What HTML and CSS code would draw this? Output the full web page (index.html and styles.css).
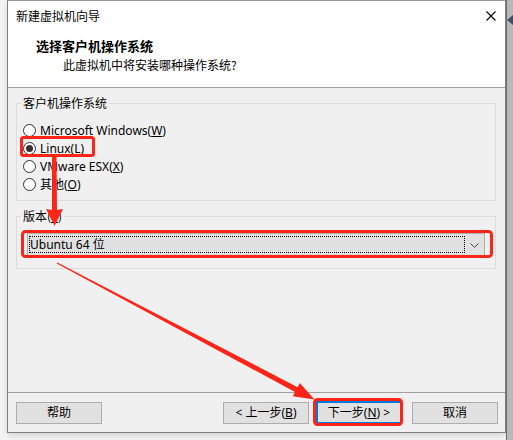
FILE: index.html
```html
<!DOCTYPE html>
<html lang="zh-CN">
<head>
<meta charset="utf-8">
<title>新建虚拟机向导</title>
<link rel="stylesheet" href="styles.css">
</head>
<body>
<div class="page">
  <div class="window">
    <div class="titlebar">
      <span class="title-text">新建虚拟机向导</span>
      <svg class="close" width="10" height="10" viewBox="0 0 10 10"><path d="M0.5 0.5 L9.5 9.5 M9.5 0.5 L0.5 9.5" stroke="#000" stroke-width="1.1" fill="none"/></svg>
    </div>
    <div class="header">
      <div class="header-title">选择客户机操作系统</div>
      <div class="header-sub">此虚拟机中将安装哪种操作系统?</div>
    </div>
    <div class="content">
      <fieldset class="group group-os">
        <legend>客户机操作系统</legend>
        <div class="radio-row"><span class="radio"></span><span>Microsoft Windows(<u>W</u>)</span></div>
        <div class="radio-row"><span class="radio checked"></span><span>Linux(<u>L</u>)</span></div>
        <div class="radio-row"><span class="radio"></span><span>VMware ESX(<u>X</u>)</span></div>
        <div class="radio-row"><span class="radio"></span><span>其他(<u>O</u>)</span></div>
      </fieldset>
      <fieldset class="group group-ver">
        <legend>版本(<u>V</u>)</legend>
        <div class="combo">
          <div class="combo-focus">Ubuntu 64 位</div>
          <svg class="chevron" width="9" height="5" viewBox="0 0 9 5"><path d="M0.5 0.5 L4.5 4.3 L8.5 0.5" stroke="#444" stroke-width="1" fill="none"/></svg>
        </div>
      </fieldset>
    </div>
    <div class="footer">
      <button class="btn">帮助</button>
      <span class="spacer"></span>
      <button class="btn btn-back">&lt; 上一步(<u>B</u>)</button>
      <button class="btn btn-next">下一步(<u>N</u>) &gt;</button>
      <button class="btn btn-cancel">取消</button>
    </div>
  </div>
  <div class="right-strip">
    <span class="strip-mark"></span>
  </div>
</div>
<svg class="annotations" width="513" height="440" viewBox="0 0 513 440">
  <rect x="21.5" y="137.5" width="72" height="18" rx="2" fill="none" stroke="#ff2418" stroke-width="3"/>
  <rect x="22.5" y="231.5" width="469" height="25" rx="3" fill="none" stroke="#ff2418" stroke-width="3"/>
  <rect x="314.5" y="399.5" width="87" height="25" rx="3" fill="none" stroke="#ff2418" stroke-width="3"/>
  <polygon points="52,157 56.5,157 57,210 63,209 54.5,226 46,209 52,210" fill="#ff2418"/>
  <polygon points="57.3,262.5 297.6,387.2 299.8,383 314.5,399.5 292.8,396.2 295,391.9 56.7,263.5" fill="#ff2418"/>
</svg>
</body>
</html>
```

FILE: styles.css
```css
* { box-sizing: border-box; }
html, body { margin: 0; padding: 0; }
body {
  width: 513px;
  height: 440px;
  overflow: hidden;
  background: #f4f4f4;
  font-family: "Noto Sans", "Noto Sans CJK SC", sans-serif;
  font-size: 12px;
  color: #000;
  position: relative;
}
.page {
  display: flex;
  height: 440px;
}
.window {
  margin-left: 7px;
  width: 499px;
  height: 433px;
  border: 1px solid #7f7f7f;
  border-top-color: #9a9a9a;
  display: flex;
  flex-direction: column;
  background: #f0f0f0;
  box-shadow: 0 3px 6px rgba(0,0,0,0.12);
}
.titlebar {
  height: 29px;
  background: #fff;
  display: flex;
  align-items: center;
  padding: 0 9px 0 8px;
}
.title-text {
  flex: 1;
  line-height: 29px;
  font-family: "Noto Sans CJK SC", sans-serif;
}
.close { display: block; }
.header {
  height: 58px;
  background: #fff;
  border-bottom: 1px solid #a0a0a0;
  padding-top: 7px;
}
.header-title {
  font-family: "Noto Sans CJK SC", sans-serif;
  font-weight: bold;
  font-size: 13px;
  line-height: 18px;
  padding-left: 28px;
}
.header-sub {
  font-family: "Noto Sans CJK SC", sans-serif;
  line-height: 16px;
  margin-top: 2px;
  padding-left: 55px;
}
.content {
  height: 304px;
  padding: 7px 9px 0 8px;
}
.group {
  margin: 0;
  border: 1px solid #dcdcdc;
  padding: 0 4px;
  min-width: 0;
}
.group legend {
  padding: 0 2px;
  line-height: 16px;
  font-family: "Noto Sans CJK SC", sans-serif;
}
.group-os {
  padding-top: 10px;
  padding-bottom: 7px;
}
.group-ver {
  margin-top: 7px;
  padding-top: 9px;
  padding-bottom: 12px;
}
.radio-row {
  display: flex;
  align-items: center;
  height: 18px;
  white-space: nowrap;
}
.radio {
  width: 13px;
  height: 13px;
  border: 1px solid #333;
  border-radius: 50%;
  background: #fff;
  margin: 0 4px 0 2px;
  display: flex;
  align-items: center;
  justify-content: center;
  flex: none;
}
.radio.checked::after {
  content: "";
  width: 7px;
  height: 7px;
  border-radius: 50%;
  background: #333;
}
.combo {
  margin: 0 6px;
  height: 23px;
  border: 1px solid #adadad;
  background: #e1e1e1;
  display: flex;
  align-items: center;
}
.combo-focus {
  flex: 1;
  height: 17px;
  margin: 0 20px 0 1px;
  border: 1px dotted #000;
  line-height: 15px;
  padding-left: 0;
  white-space: nowrap;
}
.chevron {
  display: block;
  margin-right: 5px;
  margin-left: -15px;
  margin-top: 1px;
}
.footer {
  height: 40px;
  border-top: 1px solid #a0a0a0;
  padding: 9px 7px 0 8px;
  display: flex;
  align-items: flex-start;
}
.spacer { flex: 1; }
.btn {
  width: 86px;
  height: 22px;
  border: 1px solid #adadad;
  background: #e1e1e1;
  font-family: "Noto Sans", "Noto Sans CJK SC", sans-serif;
  font-size: 12px;
  color: #000;
  padding: 0;
  line-height: 18px;
  margin: 0;
}
.btn-next {
  margin-left: 7px;
  border: 2px solid #0078d7;
  width: 86px;
  margin-top: -1px;
  height: 23px;
}
.btn-cancel { margin-left: 10px; }
.right-strip {
  flex: 1;
  height: 440px;
  background: #b9b9b9;
  border-left: 1px solid #6a6a6a;
  position: relative;
}
.strip-mark {
  display: block;
  width: 6px;
  height: 10px;
  margin-top: 15px;
  background: #3c4f66;
  clip-path: polygon(100% 0, 0 50%, 100% 100%);
}
.annotations {
  position: absolute;
  left: 0;
  top: 0;
  pointer-events: none;
}
```
